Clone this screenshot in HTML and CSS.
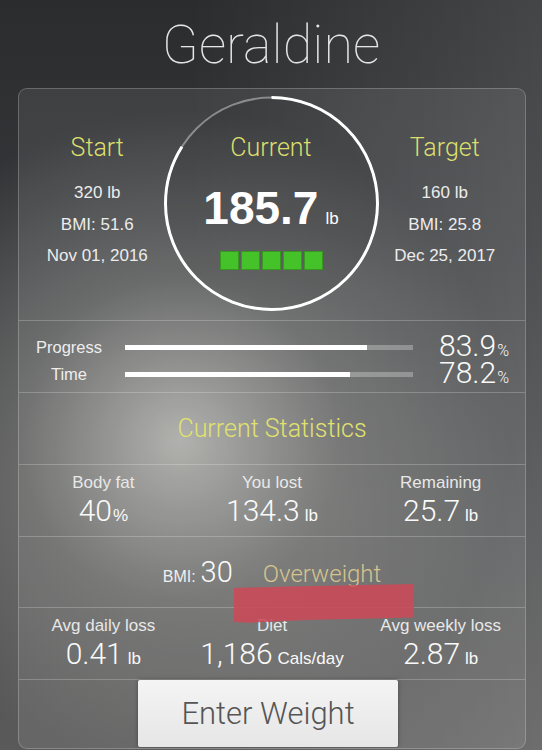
FILE: index.html
```html
<!DOCTYPE html>
<html lang="en">
<head>
<meta charset="utf-8"/>
<meta content="width=device-width, initial-scale=1.0" name="viewport"/>
<title>Geraldine</title>
<link rel="stylesheet" href="styles.css">
</head>
<body>
<h1 class="name">Geraldine</h1>
<main class="card">
  <section class="summary">
    <div class="side">
      <h2 class="label">Start</h2>
      <p>320 lb</p>
      <p>BMI: 51.6</p>
      <p>Nov 01, 2016</p>
    </div>
    <div class="dial">
      <svg class="ring" viewBox="0 0 215 215" width="215" height="215">
        <circle cx="107.5" cy="107.5" r="106" fill="none" stroke="rgba(255,255,255,0.4)" stroke-width="2"/>
        <circle cx="107.5" cy="107.5" r="106" fill="none" stroke="#fff" stroke-width="3" stroke-dasharray="558.8 666" transform="rotate(-90 107.5 107.5)"/>
      </svg>
      <h2 class="label">Current</h2>
      <div class="weight">185.7<span>lb</span></div>
      <div class="blocks"><i></i><i></i><i></i><i></i><i></i></div>
    </div>
    <div class="side">
      <h2 class="label">Target</h2>
      <p>160 lb</p>
      <p>BMI: 25.8</p>
      <p>Dec 25, 2017</p>
    </div>
  </section>

  <section class="progress">
    <span class="bar-label">Progress</span>
    <div class="track"><div class="fill" style="width: 83.9%"></div></div>
    <span class="pct">83.9<small>%</small></span>
    <span class="bar-label">Time</span>
    <div class="track"><div class="fill" style="width: 78.2%"></div></div>
    <span class="pct">78.2<small>%</small></span>
  </section>

  <section class="heading">
    <h2>Current Statistics</h2>
  </section>

  <section class="stats">
    <div class="stat"><span class="stat-label">Body fat</span><span class="stat-value">40<small class="pc">%</small></span></div>
    <div class="stat"><span class="stat-label">You lost</span><span class="stat-value">134.3<small>lb</small></span></div>
    <div class="stat"><span class="stat-label">Remaining</span><span class="stat-value">25.7<small>lb</small></span></div>
  </section>

  <section class="bmi">
    <span class="bmi-key">BMI:</span><span class="bmi-num">30</span><span class="bmi-class">Overweight</span>
  </section>

  <section class="stats">
    <div class="stat"><span class="stat-label">Avg daily loss</span><span class="stat-value">0.41<small>lb</small></span></div>
    <div class="stat"><span class="stat-label">Diet</span><span class="stat-value">1,186<small>Cals/day</small></span></div>
    <div class="stat"><span class="stat-label">Avg weekly loss</span><span class="stat-value">2.87<small>lb</small></span></div>
  </section>

  <section class="actions">
    <button class="enter" type="button">Enter Weight</button>
  </section>

  <div class="scribble"></div>
</main>
</body>
</html>
```

FILE: styles.css
```css
body {
  margin: 0;
  width: 542px;
  height: 750px;
  overflow: hidden;
  font-family: "Liberation Sans", Arial, sans-serif;
  color: #f0f0f0;
  background:
    radial-gradient(circle at 180px 440px, rgba(205,205,200,0.75) 0, rgba(165,165,160,0.35) 160px, rgba(120,120,120,0) 330px),
    linear-gradient(to right, rgba(255,255,255,0) 35%, rgba(255,255,255,0.12) 100%),
    linear-gradient(to bottom, #2a2c2e 0, #35373a 240px, #4a4b4c 500px, #5a5a5a 750px);
}

.name {
  margin: 0;
  height: 88px;
  padding-top: 2px;
  box-sizing: border-box;
  line-height: 85px;
  text-align: center;
  font-family: Roboto, sans-serif;
  font-weight: 100;
  font-size: 54px;
  color: #e6e6e6;
}

.card {
  position: relative;
  display: block;
  margin-left: 18px;
  width: 508px;
  height: 661px;
  box-sizing: border-box;
  border: 1px solid rgba(255,255,255,0.22);
  border-radius: 9px;
  background: rgba(255,255,255,0.08);
  overflow: hidden;
}

.card section + section { border-top: 1px solid rgba(255,255,255,0.22); }

.label {
  margin: 0;
  font-family: Roboto, sans-serif;
  font-weight: 300;
  font-size: 25px;
  line-height: 30px;
  color: #dcdf6c;
}

/* top: start / current / target */
.summary {
  display: grid;
  grid-template-columns: 1fr 215px 1fr;
  align-items: start;
  height: 231px;
  padding: 0 14px 0 12px;
}
.side { padding-top: 44px; text-align: center; }
.side .label { margin-bottom: 14px; }
.side p { margin: 0; font-size: 17px; line-height: 31.5px; color: #ececec; }

.dial {
  position: relative;
  width: 215px;
  height: 215px;
  margin-top: 7px;
  padding-top: 37px;
  box-sizing: border-box;
  border-radius: 50%;
  background: rgba(0,0,0,0.08);
  display: flex;
  flex-direction: column;
  align-items: center;
}
.ring { position: absolute; left: 0; top: 0; }
.weight {
  margin-top: 20px;
  font-weight: bold;
  font-size: 46px;
  line-height: 50px;
  color: #fff;
}
.weight span { margin-left: 7px; font-weight: normal; font-size: 17px; }
.blocks { display: flex; gap: 2px; margin-top: 7px; }
.blocks i { width: 19px; height: 19px; background: #45c22a; box-shadow: inset 0 0 0 1px rgba(40,110,20,0.5); }

/* progress bars */
.progress {
  display: grid;
  grid-template-columns: 80px 288px 1fr;
  grid-auto-rows: 27px;
  column-gap: 16px;
  align-items: center;
  padding: 13px 16px 4px 10px;
}
.bar-label { text-align: center; font-size: 16.5px; line-height: 27px; color: #eee; }
.track { height: 5px; background: rgba(255,255,255,0.28); }
.fill { height: 100%; background: #fff; }
.pct {
  text-align: right;
  font-family: Roboto, sans-serif;
  font-weight: 300;
  font-size: 30px;
  line-height: 27px;
  color: #fafafa;
}
.pct small { font-size: 16px; margin-left: 1px; }

.heading { height: 71px; text-align: center; }
.heading h2 {
  margin: 0;
  font-family: Roboto, sans-serif;
  font-weight: 300;
  font-size: 25px;
  line-height: 71px;
  color: #e0e26e;
}

/* three-column figures */
.stats {
  display: grid;
  grid-template-columns: 1fr 1fr 1fr;
  height: 63px;
  padding-top: 8px;
}
.stat { display: flex; flex-direction: column; align-items: center; }
.stat-label { font-size: 17px; line-height: 20px; color: #e8e8e8; }
.stat-value {
  font-family: Roboto, sans-serif;
  font-weight: 300;
  font-size: 30px;
  line-height: 35px;
  color: #fafafa;
  white-space: nowrap;
}
.stat-value small { margin-left: 5px; font-family: "Liberation Sans", Arial, sans-serif; font-size: 17px; }
.stat-value small.pc { margin-left: 1px; }

.bmi {
  height: 70px;
  text-align: center;
  font-family: Roboto, sans-serif;
  font-weight: 300;
  font-size: 29px;
  line-height: 70px;
}
.bmi span { line-height: 1; }
.bmi-key { font-family: "Liberation Sans", Arial, sans-serif; font-weight: normal; font-size: 16px; margin-right: 5px; }
.bmi-num { color: #fafafa; }
.bmi-class { margin-left: 30px; font-size: 24px; color: #d6c48e; }

.actions {
  height: 68px;
  display: flex;
  justify-content: center;
  padding-right: 8px;
}
.enter {
  width: 260px;
  height: 67px;
  border: none;
  border-radius: 2px;
  background: linear-gradient(to bottom, #f4f4f4, #e6e6e6);
  box-shadow: 0 0 4px rgba(0,0,0,0.35);
  font-family: Roboto, sans-serif;
  font-weight: 300;
  font-size: 31px;
  color: #555;
}

.scribble {
  position: absolute;
  left: 215px;
  top: 495px;
  width: 180px;
  height: 40px;
  background: #cb4a58;
  opacity: 0.88;
  clip-path: polygon(0 10%, 30% 6%, 65% 3%, 100% 0, 100% 84%, 70% 87%, 40% 90%, 8% 97%, 0 95%);
  filter: blur(0.6px);
}
```
